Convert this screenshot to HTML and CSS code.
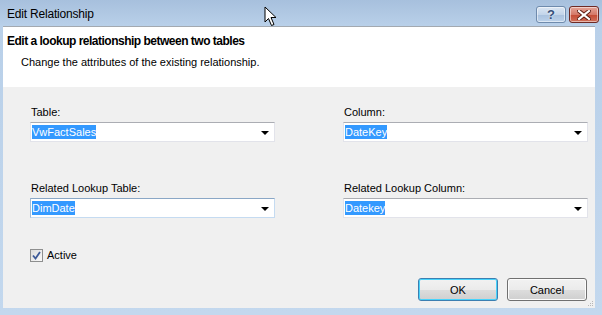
FILE: index.html
```html
<!DOCTYPE html>
<html>
<head>
    <title>Edit Relationship</title>
    <link rel="stylesheet" href="styles.css">
</head>
<body>
    <div class="window">
        <div class="titlebar">
            <span class="title">Edit Relationship</span>
            <div class="caption-buttons">
                <div class="cap help">?</div>
                <div class="cap close">
                    <svg width="14" height="10" viewBox="0 0 14 10">
                        <path d="M2 1 L12 9 M12 1 L2 9" stroke="#5a1a10" stroke-width="4" stroke-linecap="square"/>
                        <path d="M2 1 L12 9 M12 1 L2 9" stroke="#fff" stroke-width="2.2" stroke-linecap="square"/>
                    </svg>
                </div>
            </div>
        </div>

        <div class="client">
            <div class="banner">
                <h1>Edit a lookup relationship between two tables</h1>
                <p>Change the attributes of the existing relationship.</p>
            </div>

            <div class="form">
                <div class="fields">
                    <div class="field">
                        <label>Table:</label>
                        <div class="combo"><span class="sel">VwFactSales</span><span class="arrow"></span></div>
                    </div>
                    <div class="field">
                        <label>Column:</label>
                        <div class="combo"><span class="sel">DateKey</span><span class="arrow"></span></div>
                    </div>
                    <div class="field">
                        <label>Related Lookup Table:</label>
                        <div class="combo focused"><span class="sel">DimDate</span><span class="arrow"></span></div>
                    </div>
                    <div class="field">
                        <label>Related Lookup Column:</label>
                        <div class="combo"><span class="sel">Datekey</span><span class="arrow"></span></div>
                    </div>
                </div>

                <label class="check">
                    <span class="box">
                        <svg width="9" height="9" viewBox="0 0 9 9">
                            <path d="M1 4.5 L3.5 7.5 L8 1" fill="none" stroke="#3d5a98" stroke-width="1.8"/>
                        </svg>
                    </span>
                    Active
                </label>

                <div class="actions">
                    <div class="btn default">OK</div>
                    <div class="btn">Cancel</div>
                </div>
            </div>

            <svg class="grip" width="7" height="7" viewBox="0 0 7 7">
                <rect x="5" y="1" width="1" height="1" fill="#b8b8b8"/>
                <rect x="3" y="3" width="1" height="1" fill="#b8b8b8"/>
                <rect x="5" y="3" width="1" height="1" fill="#b8b8b8"/>
                <rect x="1" y="5" width="1" height="1" fill="#b8b8b8"/>
                <rect x="3" y="5" width="1" height="1" fill="#b8b8b8"/>
                <rect x="5" y="5" width="1" height="1" fill="#b8b8b8"/>
            </svg>
        </div>

        <!-- mouse pointer -->
        <svg class="cursor" width="14" height="21" viewBox="0 0 14 21">
            <path d="M1 1 L1 16 L4.5 12.5 L7.5 19.5 L10 18.5 L7 11.5 L12 11.5 Z" fill="#fff" stroke="#000" stroke-width="1" stroke-linejoin="miter"/>
        </svg>
    </div>
</body>
</html>
```

FILE: styles.css
```css
body {
    margin: 0;
    font-family: "Liberation Sans", Arial, sans-serif;
    font-size: 11px;
    color: #000;
}
.window {
    position: relative;
    width: 602px;
    height: 315px;
    box-sizing: border-box;
    padding: 0 7px 7px 3px;
    display: flex;
    flex-direction: column;
    background: linear-gradient(#a7c0dd 0, #b9d0e9 26px, #c3d8ee 100%);
}
.titlebar {
    height: 26px;
    display: flex;
    align-items: center;
    justify-content: space-between;
    padding-left: 4px;
}
.title {
    font-size: 12px;
    letter-spacing: -0.2px;
    margin-top: 1px;
}
.caption-buttons {
    display: flex;
    gap: 3px;
    margin-right: -4px;
    align-self: flex-start;
    margin-top: 6px;
}
.cap {
    width: 28px;
    height: 15px;
    border: 1px solid #6f8bad;
    border-radius: 3px;
    display: flex;
    align-items: center;
    justify-content: center;
    box-shadow: inset 0 0 0 1px rgba(255,255,255,0.5);
}
.cap.help {
    background: linear-gradient(#dbe6f3 0, #c3d5ea 50%, #a9c1de 51%, #bcd2ea 100%);
    color: #36507a;
    font-size: 13px;
    font-weight: bold;
    text-shadow: 0 0 2px #fff;
}
.cap.close {
    border-color: #6e2a24;
    background: linear-gradient(#e4a497 0, #d57a69 50%, #c44a33 51%, #d0705a 100%);
}
.client {
    position: relative;
    flex: 1;
    display: flex;
    flex-direction: column;
    background: #f0f0f0;
    border-top: 1px solid #a3a9b0;
}
.banner {
    height: 60px;
    background: #fff;
    padding: 7px 4px 0 4px;
    box-sizing: border-box;
}
.banner h1 {
    margin: 0;
    font-size: 12px;
    line-height: 15px;
    font-weight: bold;
    letter-spacing: -0.5px;
}
.banner p {
    margin: 7px 0 0 14px;
    line-height: 13px;
}
.form {
    padding: 19px 7px 0 27px;
    display: flex;
    flex-direction: column;
}
.fields {
    display: grid;
    grid-template-columns: 245px 245px;
    column-gap: 68px;
    row-gap: 40px;
}
.field label {
    display: block;
    line-height: 13px;
    margin: 0 0 3px 1px;
}
.combo {
    height: 20px;
    box-sizing: border-box;
    background: #fff;
    border: 1px solid #e2e3ea;
    border-top-color: #abadb3;
    display: flex;
    align-items: center;
    justify-content: space-between;
    padding: 0 5px 0 1px;
}
.combo.focused {
    border-color: #c5dbf1;
    border-top-color: #8aa7c6;
    border-left-color: #a6bdd5;
}
.sel {
    background: #3399ff;
    color: #fff;
    line-height: 14px;
}
.arrow {
    width: 0;
    height: 0;
    border-left: 4px solid transparent;
    border-right: 4px solid transparent;
    border-top: 4px solid #000;
    margin-top: 1px;
}
.check {
    margin-top: 31px;
    display: flex;
    align-items: center;
    gap: 4px;
    line-height: 13px;
}
.box {
    width: 11px;
    height: 11px;
    border: 1px solid #8e8f8f;
    background: linear-gradient(135deg, #dcdcdc, #fafafa);
    display: flex;
    align-items: center;
    justify-content: center;
}
.actions {
    margin-top: 16px;
    margin-right: 1px;
    display: flex;
    justify-content: flex-end;
    gap: 9px;
}
.btn {
    width: 78px;
    height: 21px;
    border: 1px solid #707070;
    border-radius: 3px;
    background: linear-gradient(#f2f2f2 0, #ebebeb 50%, #dddddd 51%, #cfcfcf 100%);
    box-shadow: inset 0 0 0 1px #fcfcfc;
    display: flex;
    align-items: center;
    justify-content: center;
}
.btn.default {
    border-color: #3c7fb1;
    box-shadow: inset 0 0 0 1px #48d3fb;
}
.grip {
    position: absolute;
    right: 1px;
    bottom: 1px;
}
.cursor {
    position: absolute;
    left: 264px;
    top: 6px;
}
```
